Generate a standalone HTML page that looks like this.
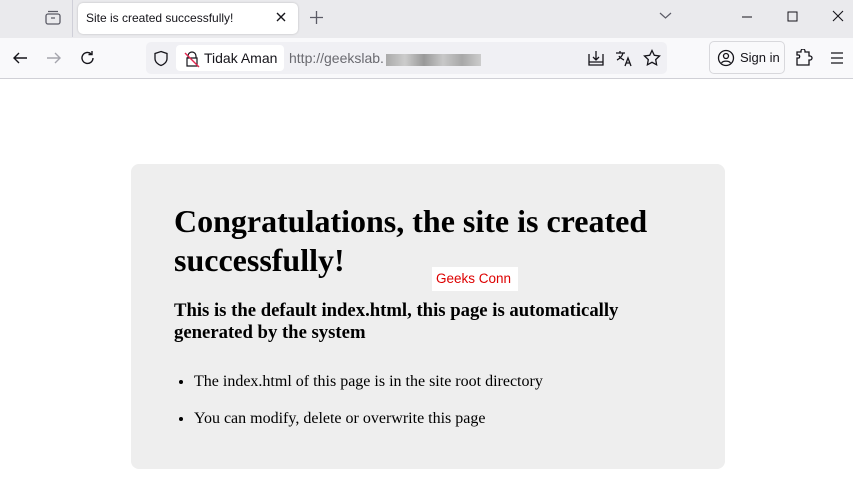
<!DOCTYPE html>
<html><head><meta charset="utf-8"><style>
*{margin:0;padding:0;box-sizing:border-box}
body{width:853px;height:495px;background:#fff;position:relative;overflow:hidden;font-family:"Liberation Sans",sans-serif}
.tabbar{position:absolute;left:0;top:0;width:853px;height:38px;background:#eaeaed}
.tab{position:absolute;left:78px;top:3px;width:220px;height:31px;background:#fff;border-radius:5px;box-shadow:0 0 2px rgba(0,0,0,.2);font-size:12px;color:#15141a;padding:8px 0 0 8px}
.toolbar{position:absolute;left:0;top:38px;width:853px;height:41px;background:#f9f9fb;border-bottom:1px solid #d0d0d6}
.url{position:absolute;left:146px;top:4px;width:521px;height:32px;background:#f0f0f4;border-radius:5px}
.ta{position:absolute;left:30px;top:3px;width:108px;height:26px;background:#fff;border-radius:4px;font-size:14px;color:#15141a;padding:5px 0 0 28px}
.sign{position:absolute;left:709px;top:3px;width:76px;height:33px;border:1px solid #d8d8dc;border-radius:5px;background:#f9f9fb;font-size:13px;color:#15141a;padding:8px 0 0 30px}
svg{position:absolute}
.box{position:absolute;left:131px;top:164px;width:594px;height:305px;background:#eeeeee;border-radius:8px;font-family:"Liberation Serif",serif;color:#000}
h1{position:absolute;left:43px;top:38px;font-size:32px;line-height:39px;font-weight:bold;width:540px}
h3{position:absolute;left:43px;top:136px;font-size:18.7px;line-height:22px;font-weight:bold;width:480px}
ul{position:absolute;left:63px;top:209px;font-size:16px;line-height:18px}
li{margin-bottom:19px}
.gc{position:absolute;left:432px;top:267px;width:86px;height:24px;background:#fff;color:#d00;font-size:13.5px;padding:4px 0 0 4px}
</style></head><body>
<div class="tabbar">
<svg style="left:44px;top:9px" width="18" height="18" viewBox="0 0 18 18" fill="none" stroke="#5b5b66" stroke-width="1.3"><rect x="2" y="5" width="14" height="10" rx="2"/><path d="M4 2.5h10M7 9h4"/></svg>
<div style="position:absolute;left:72px;top:0;width:1px;height:37px;background:#cfcfd8"></div>
<div class="tab">Site is created successfully!</div>
<svg style="left:275px;top:11px" width="12" height="12" viewBox="0 0 12 12" stroke="#15141a" stroke-width="1.4"><path d="M2 2l8 8M10 2l-8 8"/></svg>
<svg style="left:309px;top:10px" width="15" height="15" viewBox="0 0 15 15" stroke="#5b5b66" stroke-width="1.3"><path d="M7.5 1v13M1 7.5h13"/></svg>
<svg style="left:658px;top:10px" width="15" height="12" viewBox="0 0 15 12" fill="none" stroke="#5b5b66" stroke-width="1.2"><path d="M2 3l5.5 5 5.5-5"/></svg>
<svg style="left:740px;top:10px" width="14" height="14" viewBox="0 0 14 14" stroke="#15141a" stroke-width="1"><path d="M2 7h10"/></svg>
<svg style="left:786px;top:10px" width="14" height="14" viewBox="0 0 14 14" fill="none" stroke="#15141a" stroke-width="1"><rect x="2" y="2" width="9" height="9"/></svg>
<svg style="left:831px;top:9px" width="14" height="14" viewBox="0 0 14 14" stroke="#15141a" stroke-width="1.1"><path d="M2 2l10 10M12 2l-10 10"/></svg>
</div>
<div class="toolbar">
<svg style="left:11px;top:12px" width="18" height="16" viewBox="0 0 18 16" fill="none" stroke="#15141a" stroke-width="1.4"><path d="M16 8H3M8 3L3 8l5 5"/></svg>
<svg style="left:45px;top:12px" width="18" height="16" viewBox="0 0 18 16" fill="none" stroke="#a5a5ad" stroke-width="1.4"><path d="M2 8h13M10 3l5 5-5 5"/></svg>
<svg style="left:79px;top:11px" width="18" height="18" viewBox="0 0 18 18" fill="none" stroke="#15141a" stroke-width="1.4"><path d="M14 9a5.5 5.5 0 1 1-2-4.3M13 2v3.5H9.5"/></svg>
<div class="url">
<svg style="left:7px;top:8px" width="16" height="17" viewBox="0 0 16 17" fill="none" stroke="#15141a" stroke-width="1.3"><path d="M8 1.5l6 2v5c0 3.5-3 6-6 7-3-1-6-3.5-6-7v-5z"/></svg>
<div class="ta">Tidak Aman</div>
<svg style="left:38px;top:9px" width="16" height="17" viewBox="0 0 16 17" fill="none" stroke="#15141a" stroke-width="1.2"><path d="M4 7V5a4 4 0 0 1 8 0v2M3 7h10v8H3z"/><path d="M1 2l14 14" stroke="#e22850" stroke-width="1.4"/></svg>
<div style="position:absolute;left:143px;top:8px;font-size:14px;color:#6a6a70">http://geekslab.</div>
<div style="position:absolute;left:240px;top:12px;width:95px;height:12px;background:linear-gradient(90deg,#aaa,#ccc 20%,#999 40%,#c8c8c8 60%,#a8a8a8 80%,#ccc)"></div>
<svg style="left:441px;top:7px" width="18" height="18" viewBox="0 0 18 18" fill="none" stroke="#15141a" stroke-width="1.3"><path d="M2 5v11h14V5M9 2v9M6 8l3 3 3-3M2 13h14"/></svg>
<svg style="left:469px;top:7px" width="18" height="18" viewBox="0 0 18 18" fill="none" stroke="#15141a" stroke-width="1.3"><path d="M1 4h9M5 2v2M8 4c-1 4-4 6-6 7M4 7c1 2 3 3 5 4M10 17l3-8 3 8M11 14h4"/></svg>
<svg style="left:497px;top:7px" width="18" height="18" viewBox="0 0 18 18" fill="none" stroke="#15141a" stroke-width="1.3"><path d="M9 1.5l2.3 4.8 5.2.7-3.8 3.6.9 5.2L9 13.3l-4.6 2.5.9-5.2L1.5 7l5.2-.7z"/></svg>
</div>
<div class="sign">Sign in</div>
<svg style="left:717px;top:11px" width="18" height="18" viewBox="0 0 18 18" fill="none" stroke="#15141a" stroke-width="1.3"><circle cx="9" cy="9" r="7.5"/><circle cx="9" cy="7" r="2.5"/><path d="M4.5 14c1.5-2.5 7.5-2.5 9 0"/></svg>
<svg style="left:795px;top:11px" width="18" height="18" viewBox="0 0 18 18" fill="none" stroke="#15141a" stroke-width="1.3"><path d="M2 16V9h2a2 2 0 0 0 0-3H2V3h4V2a2 2 0 0 1 4 0v1h4v4h1a2 2 0 0 1 0 4h-1v5z"/></svg>
<svg style="left:829px;top:12px" width="16" height="16" viewBox="0 0 16 16" stroke="#15141a" stroke-width="1.3"><path d="M2 3h12M2 8h12M2 13h12"/></svg>
</div>
<div class="box">
<h1>Congratulations, the site is created successfully!</h1>
<h3>This is the default index.html, this page is automatically generated by the system</h3>
<ul><li>The index.html of this page is in the site root directory</li><li>You can modify, delete or overwrite this page</li></ul>
</div>
<div class="gc">Geeks Conn</div>
</body></html>
